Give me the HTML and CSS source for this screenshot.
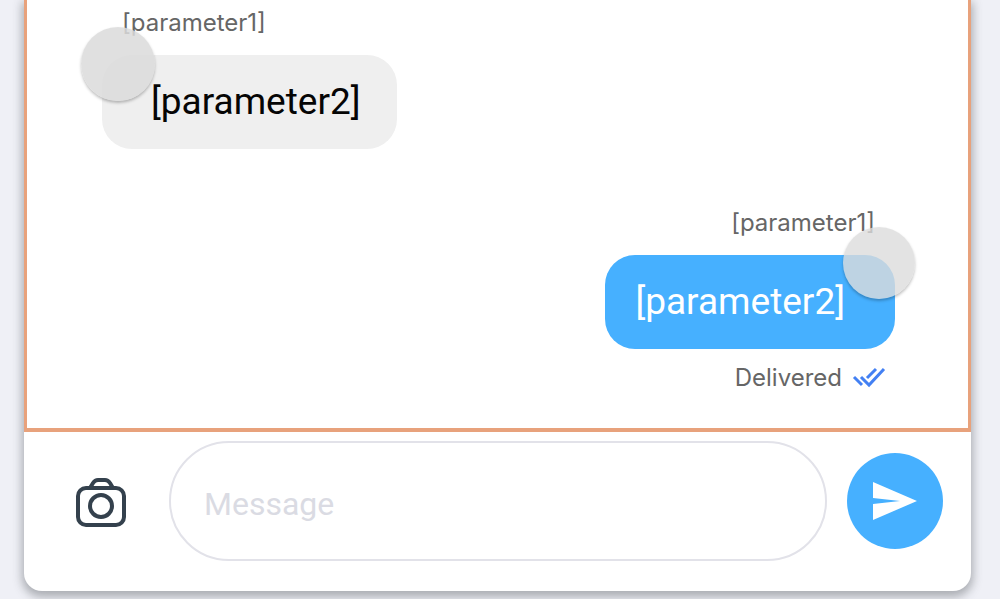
FILE: index.html
```
<!DOCTYPE html>
<html lang="en">
<head>
<meta charset="utf-8">
<meta name="viewport" content="width=device-width, initial-scale=1">
<title>Chat</title>
<link rel="stylesheet" href="styles.css">
</head>
<body>
<main class="card">
  <section class="thread" aria-label="Conversation">
    <article class="message incoming">
      <div class="sender">[parameter1]</div>
      <div class="bubble">[parameter2]<span class="avatar"></span></div>
    </article>
    <article class="message outgoing">
      <div class="sender">[parameter1]</div>
      <div class="bubble">[parameter2]<span class="avatar"></span></div>
      <div class="status">
        <span>Delivered</span>
        <svg class="ticks" viewBox="0 0 34 24" aria-hidden="true">
          <path d="M2 11l8 8M9 11l8 8L32 3M15 12l9-9" />
        </svg>
      </div>
    </article>
  </section>
  <form class="composer">
    <button class="camera" type="button" aria-label="Add photo">
      <svg viewBox="0 0 50 50" aria-hidden="true">
        <rect x="2" y="11" width="46" height="37" rx="8" />
        <path d="M14 11l3-5q2-3 5-3h7q3 0 5 3l3 5" />
        <circle cx="25" cy="29" r="11" />
      </svg>
    </button>
    <input class="field" type="text" placeholder="Message" aria-label="Message">
    <button class="send" type="button" aria-label="Send">
      <svg viewBox="0 0 44 38" aria-hidden="true">
        <path d="M0 0L44 19L0 38V22L27 19L0 16Z" />
      </svg>
    </button>
  </form>
</main>
</body>
</html>
```
FILE: styles.css
```
* {
  box-sizing: border-box;
}

body {
  margin: 0;
  padding: 0 29px 8px 24px;
  background: #eff0f6;
  font-family: Roboto, "Liberation Sans", sans-serif;
  color: #050505;
}

.card {
  background: #fff;
  border-radius: 0 0 18px 18px;
  box-shadow: 0 4px 10px 2px rgba(60, 65, 70, 0.38);
}

.thread {
  display: flex;
  flex-direction: column;
  gap: 58px;
  padding: 7px 73px 34px 75px;
  border: solid #e8a27c;
  border-width: 0 3px 4px;
}

.message {
  display: flex;
  flex-direction: column;
}

.incoming {
  align-items: flex-start;
}

.outgoing {
  align-items: flex-end;
}

.sender,
.status {
  font-family: Inter, Roboto, sans-serif;
  font-size: 24px;
  line-height: 32px;
  color: #666;
}

.sender {
  margin: 0 20px 16px;
}

.bubble {
  position: relative;
  padding: 25px 36px 25px 49px;
  border-radius: 30px;
  background: #efefef;
  font-size: 37px;
  line-height: 44px;
}

.outgoing .bubble {
  padding: 25px 50px 25px 30px;
  background: #46b0ff;
  color: #fff;
}

.avatar {
  position: absolute;
  top: -28px;
  left: -21px;
  width: 74px;
  height: 74px;
  border-radius: 50%;
  background: rgba(218, 218, 218, 0.85);
  box-shadow: 0 2px 3px rgba(0, 0, 0, 0.25);
}

.outgoing .avatar {
  right: -20px;
  left: auto;
  width: 72px;
  height: 72px;
  background: rgba(220, 220, 220, 0.8);
}

.status {
  display: flex;
  align-items: center;
  gap: 10px;
  margin: 13px 9px 0 0;
}

.ticks {
  width: 34px;
  height: 24px;
  fill: none;
  stroke: #4380f3;
  stroke-width: 3;
}

.composer {
  display: flex;
  align-items: center;
  padding: 9px 28px 30px 52px;
}

.camera,
.send {
  flex: none;
  display: flex;
  align-items: center;
  justify-content: center;
  padding: 0;
  border: 0;
  background: none;
}

.camera {
  padding-top: 2px;
}

.camera svg {
  width: 50px;
  height: 50px;
  fill: none;
  stroke: #34414d;
  stroke-width: 4;
}

.field {
  flex: 1;
  min-width: 0;
  height: 120px;
  margin: 0 20px 0 43px;
  padding: 6px 33px 0;
  border: 2px solid #e2e2e9;
  border-radius: 60px;
  background: #fff;
  font: 32px Roboto, sans-serif;
  color: #050505;
}

.field::placeholder {
  color: #dadbe3;
  opacity: 1;
}

.send {
  width: 96px;
  height: 96px;
  border-radius: 50%;
  background: #46b0ff;
}

.send svg {
  width: 44px;
  height: 38px;
  fill: #fff;
}
```
